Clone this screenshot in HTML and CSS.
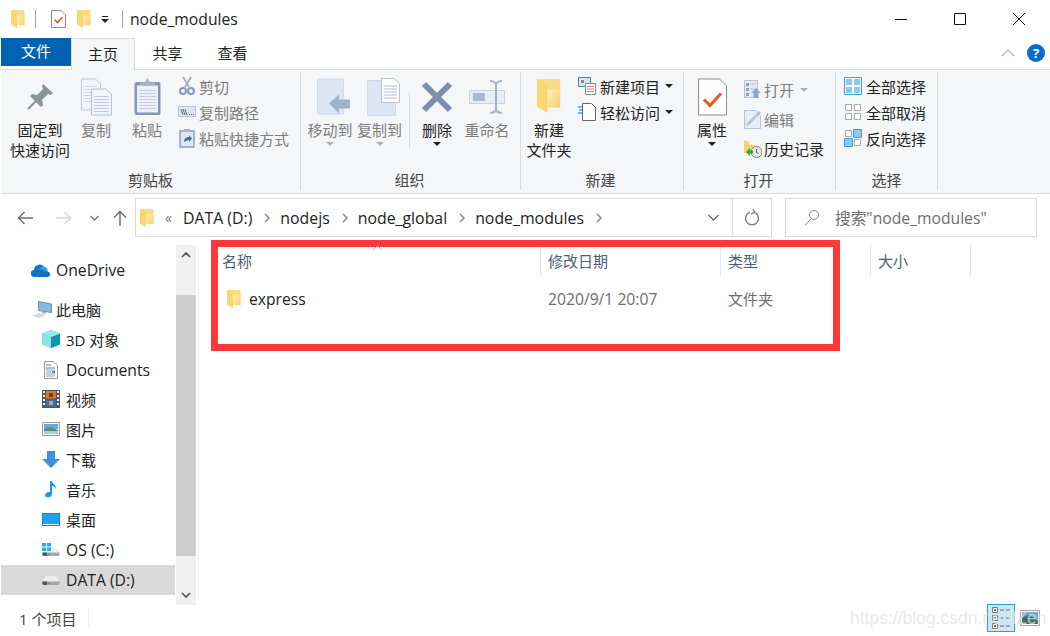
FILE: index.html
```html
<!DOCTYPE html>
<html>
 <head>
  <title>node_modules</title><meta charset="utf-8">
  <link rel="stylesheet" href="styles.css">
 </head>
 <body>
  <svg class="defs" width="0" height="0">
    <defs>
      <linearGradient id="folder-front" x1="0" y1="0" x2="1" y2="1">
        <stop offset="0" stop-color="#ffeeb4"/>
        <stop offset="1" stop-color="#f7cf68"/>
      </linearGradient>
    </defs>
    <symbol id="folder" viewBox="0 0 14 19" preserveAspectRatio="none">
      <path d="M0 0h13.500v15H0z" fill="#f9dc86"/>
      <path d="M0 0l6 2.500V19L0 15.500z" fill="#f8d674"/>
      <path d="M6 6h7.500v10H6z" fill="url(#folder-front)"/>
    </symbol>
    <symbol id="drive" viewBox="0 0 20 12">
      <path d="M4 1h11l4.500 6H.5z" fill="#eceef0"/>
      <path d="M.5 7h19v3l-1 1H1.500l-1-1z" fill="#a2a6aa"/>
      <path d="M.5 7h5v4H1.500l-1-1z" fill="#55595e"/>
      <path d="M6 8.500h3V10H6z" fill="#4fb848"/>
    </symbol>
    <symbol id="chev" viewBox="0 0 6 10">
      <path d="M1 1l4 4-4 4" fill="none" stroke="#868686" stroke-width="1.500"/>
    </symbol>
  </svg>

  <div class="window">
    <div class="titlebar">
      <svg class="qa-folder" width="14" height="18"><use href="#folder"/></svg>
      <span class="qa-sep"></span>
      <svg class="qa-check" width="15" height="18" viewBox="0 0 15 18">
        <path d="M.5.500h9.500l4.500 4.500v12.500H.5z" fill="#fff" stroke="#8a8a8a"/>
        <path d="M3.500 9.500l3 3 5-5.500" fill="none" stroke="#e8531f" stroke-width="1.600"/>
      </svg>
      <svg class="qa-folder2" width="14" height="18"><use href="#folder"/></svg>
      <svg class="qa-more" width="8" height="7" viewBox="0 0 8 7"><path d="M1 0h6v1H1zM0 3h8L4 7z" fill="#222"/></svg>
      <span class="qa-sep qa-sep2"></span>
      <span class="title">node_modules</span>
      <div class="win-btns">
        <svg width="14" height="14" viewBox="0 0 14 14"><path d="M1 7.500h12" stroke="#111"/></svg>
        <svg width="14" height="14" viewBox="0 0 14 14"><path d="M1.500 1.500h11v11h-11z" fill="none" stroke="#111"/></svg>
        <svg width="14" height="14" viewBox="0 0 14 14"><path d="M1 1l12 12M13 1L1 13" stroke="#111"/></svg>
      </div>
    </div>

    <div class="tabs">
      <div class="tab tab-file">文件</div>
      <div class="tab tab-on">主页</div>
      <div class="tab">共享</div>
      <div class="tab">查看</div>
      <div class="tabs-right">
        <svg width="14" height="8" viewBox="0 0 14 8"><path d="M1 7l6-6 6 6" fill="none" stroke="#aeaeae" stroke-width="1.200"/></svg>
        <span class="help">?</span>
      </div>
    </div>

    <div class="ribbon">
      <div class="group g-clip">
        <div class="group-body">
          <div class="big b-pin">
            <svg width="26" height="26" viewBox="0 0 26 26"><path d="M16 0l10 9-2 2-3-1-6 6 1 5-2 2L3 12l2-2 5 1 6-6-1-3z" fill="#8b9497"/><path d="M1 25l8-8" stroke="#8b9497" stroke-width="2.200"/></svg>
            <span>固定到<br>快速访问</span>
          </div>
          <div class="big b-copy off">
            <svg width="31" height="37" viewBox="0 0 31 37">
              <path d="M.5.500h14l5 5v26H.5z" fill="#f2f5fb" stroke="#b9c6dc"/>
              <path d="M3 8h13M3 11h13M3 14h13M3 17h13M3 20h13M3 23h13" stroke="#cdd6e8"/>
              <path d="M10.500 10.500h14l6 5v21h-20z" fill="#f2f5fb" stroke="#b0bed6"/>
              <path d="M13 18h15M13 21h15M13 24h15M13 27h15M13 30h15M13 33h15" stroke="#bcc8de"/>
            </svg>
            <span>复制</span>
          </div>
          <div class="big b-paste off">
            <svg width="27" height="37" viewBox="0 0 27 37">
              <rect x=".5" y="3.500" width="26" height="33" rx="2" fill="#8596b2"/>
              <path d="M3 7h21v27H3z" fill="#eef1f7"/>
              <path d="M5 12h17M5 15h17M5 18h17M5 21h17M5 24h17M5 27h17M5 30h17" stroke="#c4cee0"/>
              <path d="M6 7V4h5l2-4h1l2 4h5v3z" fill="#a8b4c9"/>
            </svg>
            <span>粘贴</span>
          </div>
          <div class="small-col c-clip off">
            <div class="small">
              <svg width="18" height="20" viewBox="0 0 18 20"><path d="M5 1l6 10M13 1L7 11" stroke="#a6a9ae" stroke-width="1.600"/><circle cx="5" cy="15" r="3" fill="none" stroke="#8599b8" stroke-width="2"/><circle cx="13" cy="15" r="3" fill="none" stroke="#8599b8" stroke-width="2"/></svg>
              <span>剪切</span>
            </div>
            <div class="small">
              <svg width="18" height="12" viewBox="0 0 18 12"><path d="M.5.500h17v10H.5z" fill="#dfe6f1" stroke="#b5c3d8"/><path d="M3 3l2 6M5 3l2 6M7 3l2 6" stroke="#667"/><path d="M11 8.500h5" stroke="#667" stroke-dasharray="1 1"/></svg>
              <span>复制路径</span>
            </div>
            <div class="small">
              <svg width="16" height="20" viewBox="0 0 16 20"><path d="M1 3h14v16H1z" fill="#dfe6f1" stroke="#8b9cb7" stroke-width="1.400"/><path d="M5 1h6v3H5z" fill="#a8b4c9"/><path d="M5 14c0-3 2-5 5-5V7l3 3.500-3 3.500v-2c-2 0-3 1-5 2z" fill="#4c6a96"/></svg>
              <span>粘贴快捷方式</span>
            </div>
          </div>
        </div>
        <div class="group-label">剪贴板</div>
      </div>

      <div class="group g-org">
        <div class="group-body">
          <div class="big b-move off">
            <svg width="33" height="37" viewBox="0 0 33 37">
              <path d="M.5.500h26v35H.5z" fill="#dce5f3" stroke="#cfdaeb"/>
              <path d="M12 25l10-9v5h11v9H22v5z" fill="#9fb0cb"/>
            </svg>
            <span>移动到</span><i class="drop"></i>
          </div>
          <div class="big b-copyto off">
            <svg width="33" height="38" viewBox="0 0 33 38">
              <path d="M.5 2.500h28v35H.5z" fill="#dce5f3" stroke="#cfdaeb"/>
              <path d="M14.500.500h12l6 5v19h-18z" fill="#fff" stroke="#b3c4dc"/>
              <path d="M17 8h13M17 11h13M17 14h13M17 17h13M17 20h13" stroke="#a9bbd4"/>
            </svg>
            <span>复制到</span><i class="drop"></i>
          </div>
          <span class="vsep"></span>
          <div class="big b-del">
            <svg width="32" height="32" viewBox="0 0 32 32"><path d="M3 3l26 26M29 3L3 29" stroke="#7e8fab" stroke-width="6"/></svg>
            <span>删除</span><i class="drop dark"></i>
          </div>
          <div class="big b-ren off">
            <svg width="36" height="34" viewBox="0 0 36 34">
              <path d="M.5 10.500h35v13H.5z" fill="#e6edf7" stroke="#c4d2e6"/>
              <path d="M4 13h12v8H4z" fill="#a9b9d1"/>
              <path d="M21 1c3 0 5 1 6 3 1-2 3-3 6-3M27 4v26M21 33c3 0 5-1 6-3 1 2 3 3 6 3" fill="none" stroke="#a3b3ca" stroke-width="2"/>
            </svg>
            <span>重命名</span>
          </div>
        </div>
        <div class="group-label">组织</div>
      </div>

      <div class="group g-new">
        <div class="group-body">
          <div class="big b-newf">
            <svg class="folder-lg" width="24" height="34"><use href="#folder"/></svg>
            <span>新建<br>文件夹</span>
          </div>
          <div class="small-col c-new">
            <div class="small">
              <svg width="18" height="18" viewBox="0 0 18 18">
                <path d="M.5.500h12v9H.5z" fill="#d7e7f5" stroke="#4e7fa6"/>
                <path d="M3 3h3v3H3z" fill="#6aa350"/>
                <path d="M7.500 6.500h10v11h-10z" fill="#fff" stroke="#8b8b8b"/>
                <path d="M9 9.500h7M9 12h7M9 14.500h7" stroke="#d98080"/>
              </svg>
              <span>新建项目</span><i class="drop dark"></i>
            </div>
            <div class="small">
              <svg width="18" height="18" viewBox="0 0 18 18">
                <path d="M4.500.500h9l4 4v13h-13z" fill="#fff" stroke="#666"/>
                <path d="M0 4h5M1 7h4M0 10h5" stroke="#1c6fb8"/>
              </svg>
              <span>轻松访问</span><i class="drop dark"></i>
            </div>
          </div>
        </div>
        <div class="group-label">新建</div>
      </div>

      <div class="group g-open">
        <div class="group-body">
          <div class="big b-prop">
            <svg width="29" height="37" viewBox="0 0 29 37">
              <path d="M.5.500h21l7 7v29H.5z" fill="#fff" stroke="#8d8d8d"/>
              <path d="M6 21l6 6 11-12" fill="none" stroke="#ea5a1c" stroke-width="3"/>
            </svg>
            <span>属性</span><i class="drop dark"></i>
          </div>
          <div class="small-col c-open">
            <div class="small off">
              <svg width="18" height="19" viewBox="0 0 18 19">
                <path d="M.5.500h13v17H.5z" fill="#e5ebf4" stroke="#b5c3d8"/>
                <path d="M2 3h3v3H2zM2 8h3v3H2zM2 13h3v3H2z" fill="#8fa2be"/>
                <path d="M6 4h6M6 9h6" stroke="#b5c3d8"/>
                <path d="M12 8l5 5h-2.500v5h-5v-5H7z" fill="#8ea8c8"/>
              </svg>
              <span>打开</span><i class="drop"></i>
            </div>
            <div class="small off">
              <svg width="18" height="19" viewBox="0 0 18 19">
                <path d="M.5.500h11l5 5v13H.5z" fill="#e7edf6" stroke="#b5c3d8"/>
                <path d="M3 15L16 2" stroke="#b4c4dc" stroke-width="2.500"/>
              </svg>
              <span>编辑</span>
            </div>
            <div class="small">
              <svg width="18" height="19" viewBox="0 0 18 19">
                <path d="M0 1l5 2v3h6v8H0z" fill="#f7d26c"/>
                <circle cx="12.500" cy="13" r="5.500" fill="#e8e8e8" stroke="#808080"/>
                <path d="M12.500 10v3.500l2 1" fill="none" stroke="#555"/>
                <path d="M2 13l4-4v2.500h3v3H6V17z" fill="#3aa53a"/>
              </svg>
              <span>历史记录</span>
            </div>
          </div>
        </div>
        <div class="group-label">打开</div>
      </div>

      <div class="group g-sel">
        <div class="group-body">
          <div class="small-col c-sel">
            <div class="small">
              <svg width="18" height="18" viewBox="0 0 18 18"><path d="M.5.500h17v17H.5z" fill="#fff" stroke="#3c9fe0"/><path d="M2 2h6v6H2zM10 2h6v6h-6zM2 10h6v6H2zM10 10h6v6h-6z" fill="#8cc8f2"/></svg>
              <span>全部选择</span>
            </div>
            <div class="small">
              <svg width="18" height="18" viewBox="0 0 18 18"><path d="M1.500 1.500h6v6h-6zM10.500 1.500h6v6h-6zM1.500 10.500h6v6h-6zM10.500 10.500h6v6h-6z" fill="#fff" stroke="#a8a8a8"/></svg>
              <span>全部取消</span>
            </div>
            <div class="small">
              <svg width="18" height="18" viewBox="0 0 18 18"><path d="M1.500 1.500h6v6h-6zM10.500 10.500h6v6h-6z" fill="#fff" stroke="#a8a8a8"/><path d="M9.500.500h8v8h-8zM.5 9.500h8v8h-8z" fill="#8cc8f2" stroke="#3c9fe0"/></svg>
              <span>反向选择</span>
            </div>
          </div>
        </div>
        <div class="group-label">选择</div>
      </div>
    </div>

    <div class="addressbar">
      <div class="nav-btns">
        <svg class="n-back" width="16" height="14" viewBox="0 0 16 14"><path d="M16 7H1.500M7.500 1l-6 6 6 6" fill="none" stroke="#6f6f6f" stroke-width="1.500"/></svg>
        <svg class="n-fwd" width="16" height="14" viewBox="0 0 16 14"><path d="M0 7h14.500M8.500 1l6 6-6 6" fill="none" stroke="#d6d6d6" stroke-width="1.500"/></svg>
        <svg class="n-down" width="9" height="6" viewBox="0 0 9 6"><path d="M.5 1l4 4 4-4" fill="none" stroke="#777" stroke-width="1.400"/></svg>
        <svg class="n-up" width="14" height="16" viewBox="0 0 14 16"><path d="M7 16V1.500M1 7.500l6-6 6 6" fill="none" stroke="#6f6f6f" stroke-width="1.500"/></svg>
      </div>
      <div class="path">
        <svg class="path-folder" width="14" height="18"><use href="#folder"/></svg>
        <span class="crumb-more">«</span>
        <span class="crumb">DATA (D:)</span><svg class="chev" width="6" height="10"><use href="#chev"/></svg>
        <span class="crumb">nodejs</span><svg class="chev" width="6" height="10"><use href="#chev"/></svg>
        <span class="crumb">node_global</span><svg class="chev" width="6" height="10"><use href="#chev"/></svg>
        <span class="crumb">node_modules</span><svg class="chev" width="6" height="10"><use href="#chev"/></svg>
        <svg class="path-drop" width="11" height="7" viewBox="0 0 11 7"><path d="M.5 1l5 5 5-5" fill="none" stroke="#666" stroke-width="1.300"/></svg>
        <div class="path-refresh">
          <svg width="16" height="17" viewBox="0 0 16 17"><path d="M10 3.200a6.500 6.500 0 1 1-4 0" fill="none" stroke="#7a7a7a" stroke-width="1.300"/><path d="M9 0l1.500 3.300L7 5" fill="none" stroke="#7a7a7a" stroke-width="1.300"/></svg>
        </div>
      </div>
      <div class="search">
        <svg width="16" height="17" viewBox="0 0 16 17"><circle cx="10" cy="6" r="4.500" fill="none" stroke="#8a8a8a"/><path d="M7 10l-6 6" stroke="#8a8a8a"/></svg>
        <span>搜索"node_modules"</span>
      </div>
    </div>

    <div class="main">
      <div class="sidebar">
        <ul class="tree">
          <li class="t-one en">
            <svg width="20" height="14" viewBox="0 0 20 14"><path d="M3.500 14a3.500 3.500 0 0 1-.5-7A5.500 5.500 0 0 1 13 4a4.500 4.500 0 0 1 3.500 4.500A2.800 2.800 0 0 1 17 14z" fill="#1172c4"/><path d="M7 6.500a5 5 0 0 1 6-2.500 4.500 4.500 0 0 1 3.500 4.500c-2-.5-3 0-4-1-1.500-1.500-3.500-1.500-5.500-1z" fill="#2aa0e8"/></svg>
            <span>OneDrive</span>
          </li>
          <li class="t-pc">
            <svg width="20" height="17" viewBox="0 0 20 17">
              <path d="M6.500.500l13 2.500v8.500l-13-2z" fill="#7fbcea" stroke="#7b8a99"/>
              <path d="M10 10.500l4 .7v1.500l-4-.7z" fill="#a9b2ba"/>
              <path d="M0 15l7-3 7 2-7 3z" fill="#d3d7db"/>
            </svg>
            <span>此电脑</span>
          </li>
          <li>
            <svg width="18" height="18" viewBox="0 0 18 18"><path d="M9 0l9 3.500v11L9 18 0 14.500v-11z" fill="#33c6d6"/><path d="M9 7l9-3.500v11L9 18z" fill="#0e97ab"/><path d="M9 0l9 3.500L9 7 0 3.500z" fill="#9be9ef"/><path d="M0 3.500L9 7v11L0 14.500z" fill="#c9f3f4" opacity=".6"/></svg>
            <span>3D 对象</span>
          </li>
          <li class="en">
            <svg width="18" height="18" viewBox="0 0 18 18"><path d="M2.500.500h9l4 4v13h-13z" fill="#fff" stroke="#9a9a9a"/><path d="M4 4h5M4 7h9" stroke="#3a82c4"/><path d="M4 9h9M4 11h5M4 13h9M4 15h9" stroke="#8fa0b0"/><path d="M10 10h3v2h-3z" fill="#4aa564"/></svg>
            <span>Documents</span>
          </li>
          <li>
            <svg width="18" height="18" viewBox="0 0 18 18"><path d="M0 0h18v18H0z" fill="#555"/><path d="M1 1h2v2H1zM1 5h2v2H1zM1 9h2v2H1zM1 13h2v2H1zM15 1h2v2h-2zM15 5h2v2h-2zM15 9h2v2h-2zM15 13h2v2h-2z" fill="#eee"/><path d="M4 1h10v7.500H4z" fill="#d8792a"/><path d="M4 9.500h10V17H4z" fill="#2a6fd0"/><path d="M7 3h4v4H7z" fill="#7a3e16"/><path d="M7 11h4v4H7z" fill="#d8a82a"/></svg>
            <span>视频</span>
          </li>
          <li>
            <svg width="18" height="14" viewBox="0 0 18 14"><path d="M.5.500h17v13H.5z" fill="#fff" stroke="#9a9a9a"/><path d="M2 2h14v5H2z" fill="#6ba9d8"/><path d="M2 7l6-2 8 3v4H2z" fill="#5a8c7c"/><path d="M2 9h14v3H2z" fill="#a9d0dc"/></svg>
            <span>图片</span>
          </li>
          <li>
            <svg width="18" height="17" viewBox="0 0 18 17"><path d="M5 0h8v8h5l-9 9-9-9h5z" fill="#3d8fe0"/></svg>
            <span>下载</span>
          </li>
          <li>
            <svg width="18" height="18" viewBox="0 0 18 18"><path d="M8 1h2c0 3 4 3 4 8-1-2-2-3-4-3v8c0 2-2 3.500-4 3.500s-3-1-3-2.500 2-3 4-3l1 .2z" fill="#1a9be8"/></svg>
            <span>音乐</span>
          </li>
          <li>
            <svg width="18" height="13" viewBox="0 0 18 13"><path d="M0 0h18v13H0z" fill="#0a84d8"/><path d="M1 1h16v10H1z" fill="#22a2ee"/><path d="M1 11h16v1H1z" fill="#e8f4fc"/></svg>
            <span>桌面</span>
          </li>
          <li class="en">
            <svg width="18" height="14" viewBox="0 0 18 14"><svg x="0" y="3" width="18" height="11"><use href="#drive"/></svg><path d="M0 0h4v3.500H0zM5 0h4v3.500H5zM0 4.500h4V8H0zM5 4.500h4V8H5z" fill="#18b0ee"/></svg>
            <span>OS (C:)</span>
          </li>
          <li class="sel en">
            <svg width="18" height="11"><use href="#drive"/></svg>
            <span>DATA (D:)</span>
          </li>
        </ul>
        <div class="scrollbar">
          <div class="scroll-btn">
            <svg width="10" height="6" viewBox="0 0 10 6"><path d="M1 5l4-4 4 4" fill="none" stroke="#505050" stroke-width="1.600"/></svg>
          </div>
          <div class="scroll-thumb"></div>
          <div class="scroll-btn bottom">
            <svg width="10" height="6" viewBox="0 0 10 6"><path d="M1 1l4 4 4-4" fill="none" stroke="#505050" stroke-width="1.600"/></svg>
          </div>
        </div>
      </div>

      <div class="list">
        <div class="list-head">
          <div class="col c-name">名称</div>
          <div class="col c-date">修改日期</div>
          <div class="col c-type">类型</div>
          <div class="col c-size">大小</div>
        </div>
        <div class="list-row">
          <div class="cell c-name">
            <svg width="14" height="18"><use href="#folder"/></svg>
            <span>express</span>
          </div>
          <div class="cell c-date">2020/9/1 20:07</div>
          <div class="cell c-type">文件夹</div>
        </div>
      </div>
    </div>

    <div class="statusbar">
      <span class="count">1 个项目</span>
      <div class="views">
        <div class="view-btn">
          <svg width="18" height="22" viewBox="0 0 18 22">
            <path d="M.5.500h5v5h-5zM.5 8.500h5v5h-5zM.5 16.500h5v5h-5z" fill="#fff" stroke="#777"/>
            <path d="M2 2h2v2H2zM2 10h2v2H2z" fill="#4b6c9c"/><path d="M2 18h2v2H2z" fill="#c0392b"/>
            <path d="M8 3h4M14 3h4M8 11h4M14 11h4M8 19h4M14 19h4" stroke="#666"/>
          </svg>
        </div>
        <svg class="view-thumb" width="20" height="16" viewBox="0 0 20 16"><path d="M.5.500h19v15H.5z" fill="#fff" stroke="#a0a0a0"/><path d="M2 2h16v7H2z" fill="#6ba9d8"/><path d="M2 8l6-3 10 5v4H2z" fill="#3f6f68"/></svg>
      </div>
    </div>
  </div>

  <!-- annotation drawn over the screenshot -->
  <div class="red-box"></div>
  <svg class="sort-mark" width="9" height="5" viewBox="0 0 9 5"><path d="M.5 4.500l4-4 4 4" fill="none" stroke="#a0a0a0"/></svg>
  <div class="watermark">https://blog.csdn.net/IZen</div>
 </body>
</html>
```

FILE: styles.css
```css
* {
  box-sizing: border-box;
}

html, body {
  margin: 0;
  height: 100%;
  overflow: hidden;
  background: #fff;
}

body {
  position: relative;
  font-family: "Open Sans", "Noto Sans CJK SC", sans-serif;
  font-size: 15px;
  color: #222;
}

.defs {
  position: absolute;
}

svg {
  display: block;
  flex: none;
}

.window {
  display: flex;
  flex-direction: column;
  width: 1050px;
  height: 636px;
}

/* title bar */
.titlebar {
  display: flex;
  align-items: center;
  height: 38px;
  padding-left: 11px;
}

.qa-sep {
  width: 1px;
  height: 18px;
  background: #a0a0a0;
  margin-left: 10px;
}

.qa-check {
  margin-left: 15px;
}

.qa-folder2 {
  margin-left: 11px;
}

.qa-more {
  margin-left: 10px;
}

.qa-sep2 {
  margin-left: 13px;
}

.title {
  margin-left: 7px;
  font-size: 15.7px;
}

.win-btns {
  display: flex;
  gap: 45px;
  margin-left: auto;
  padding-right: 24px;
}

/* tabs */
.tabs {
  display: flex;
  height: 32px;
  padding-left: 1px;
  border-bottom: 1px solid #dadbdc;
}

.tab {
  width: 65px;
  text-align: center;
  line-height: 30px;
}

.tab-file {
  width: 70px;
  height: 28px;
  background: #0063b1;
  color: #fff;
  line-height: 27px;
}

.tab-on {
  width: 64px;
  height: 32px;
  background: #f5f6f7;
  border: 1px solid #dadbdc;
  border-bottom: 0;
}

.tabs-right {
  display: flex;
  align-items: center;
  gap: 12px;
  margin-left: auto;
  padding: 0 5px 2px 0;
}

.help {
  width: 18px;
  height: 18px;
  border-radius: 50%;
  background: #0a6cc8;
  color: #fff;
  font-size: 13px;
  font-weight: 700;
  line-height: 18px;
  text-align: center;
}

/* ribbon */
.ribbon {
  display: flex;
  height: 124px;
  margin-left: 1px;
  padding-top: 2px;
  background: #f5f6f7;
  border-bottom: 1px solid #dadbdc;
}

.group {
  display: flex;
  flex-direction: column;
  height: 118px;
  border-right: 1px solid #dadbdc;
}

.g-clip { width: 300px; }
.g-org { width: 220px; }
.g-new { width: 163px; }
.g-open { width: 152px; }
.g-sel { width: 102px; }

.g-clip .group-body { padding-left: 9px; }
.g-org .group-body { padding-left: 4px; }
.g-new .group-body { padding-left: 4px; }
.g-open .group-body { padding-left: 6px; }
.g-sel .group-body { padding-left: 8px; }

.group-body {
  display: flex;
  flex: 1;
}

.group-label {
  height: 20px;
  text-align: center;
  line-height: 20px;
  color: #444;
}

.g-org .group-label { padding-right: 2px; }
.g-new .group-label { padding-right: 3px; }
.g-open .group-label { padding-right: 2px; }

.big {
  display: flex;
  flex-direction: column;
  align-items: center;
  height: 92px;
  padding-top: 4px;
  line-height: 20px;
  text-align: center;
  white-space: nowrap;
}

.big svg {
  height: 40px;
  margin-bottom: 4px;
  padding-top: 2px;
  overflow: visible;
}

.big .folder-lg {
  height: 40px;
  padding: 3px 0;
}

.off {
  color: #7c7c7c;
}

.b-pin { width: 60px; }
.b-copy { width: 52px; }
.b-paste { width: 50px; }
.b-move { width: 50px; }
.b-copyto { width: 49px; }
.b-del { width: 46px; }
.b-ren { width: 50px; margin-left: 2px; }
.b-newf { width: 48px; }
.b-prop { width: 44px; }

.b-move svg { margin-left: 6px; }
.b-copyto svg { margin-left: 7px; }

.vsep {
  width: 1px;
  height: 55px;
  margin: 21px 4px 0 5px;
  background: #dadbdc;
}

.drop {
  display: block;
  width: 0;
  height: 0;
  margin-top: 2px;
  border: 4px solid transparent;
  border-top-color: #b0b0b0;
  border-bottom: 0;
}

.drop.dark {
  border-top-color: #222;
}

.small-col {
  display: flex;
  flex-direction: column;
  padding-top: 1px;
}

.c-clip { margin-left: 6px; }
.c-new { margin-left: 5px; }
.c-open { margin-left: 10px; padding-top: 3px; }

.small {
  display: flex;
  align-items: center;
  height: 26px;
  white-space: nowrap;
}

.c-open .small {
  height: 29.500px;
}

.small svg {
  width: 18px;
  margin-right: 4px;
}

.c-clip .small svg { margin-right: 3px; }
.c-open .small svg { margin-right: 2px; }

.small .drop {
  margin: 0 0 0 5px;
}

.c-open .small .drop {
  margin-left: 6px;
}

/* address bar */
.addressbar {
  display: flex;
  align-items: center;
  height: 46px;
  padding-top: 3px;
  padding-bottom: 2px;
  padding-right: 13px;
}

.nav-btns {
  display: flex;
  align-items: center;
  width: 135px;
  padding-left: 17px;
}

.n-fwd { margin-left: 23px; }
.n-down { margin-left: 18px; }
.n-up { margin-left: 14px; }

.path {
  display: flex;
  align-items: center;
  width: 637px;
  height: 39px;
  border: 1px solid #d9d9d9;
  padding-left: 4px;
  font-size: 15.850px;
}

.crumb-more {
  margin: 0 11px;
  font-size: 14px;
  color: #777;
}

.chev {
  margin: 0 10px 0 12px;
}

.path-drop {
  margin-left: auto;
  margin-right: 13px;
}

.path-refresh {
  display: flex;
  align-items: center;
  justify-content: center;
  width: 39px;
  height: 37px;
  border-left: 1px solid #d9d9d9;
}

.search {
  display: flex;
  align-items: center;
  gap: 15px;
  flex: 1;
  height: 39px;
  margin-left: 13px;
  padding-left: 18px;
  border: 1px solid #d9d9d9;
  color: #6d6d6d;
  font-size: 15.7px;
}

/* sidebar + list */
.main {
  display: flex;
  height: 360px;
  padding-top: 5px;
}

.sidebar {
  display: flex;
  width: 199px;
  padding-left: 1px;
  border-right: 1px solid #f0f0f0;
}

.tree {
  list-style: none;
  margin: 0;
  padding: 10px 0 0;
  width: 174px;
}

.tree li {
  display: flex;
  align-items: center;
  height: 30px;
  padding-left: 41px;
  padding-bottom: 2px;
}

.tree li.en {
  padding-bottom: 0;
  font-size: 15.7px;
}

.tree li svg {
  width: 18px;
  margin-right: 6px;
}

.tree li.t-one {
  padding-left: 30px;
  margin-bottom: 10px;
}

.tree li.t-one svg {
  width: 20px;
  margin-right: 5px;
}

.tree li.t-pc {
  padding-left: 31px;
}

.tree li.t-pc svg {
  width: 20px;
  margin-right: 4px;
}

.tree li.sel {
  background: #d9d9d9;
}

.scrollbar {
  display: flex;
  flex-direction: column;
  width: 20px;
  height: 360px;
  margin-left: 1px;
  background: #f0f0f0;
}

.scroll-btn {
  display: flex;
  justify-content: center;
  height: 50px;
  padding-top: 7px;
}

.scroll-btn.bottom {
  align-items: flex-end;
  height: 49px;
  padding: 0 0 7px;
}

.scroll-thumb {
  flex: 1;
  background: #cdcdcd;
}

.list {
  flex: 1;
  padding-left: 15px;
}

.list-head,
.list-row {
  display: flex;
}

.list-head {
  height: 32px;
  color: #4c607a;
}

.col,
.cell {
  padding-left: 7px;
}

.col {
  line-height: 33px;
  border-right: 1px solid #e5e5e5;
}

.col.c-name { padding-left: 8px; }

.c-name { width: 327px; }
.c-date { width: 180px; }
.c-type { width: 150px; }
.c-size { width: 100px; }

.list-row {
  align-items: center;
  height: 30px;
  margin-top: 6px;
  color: #6d6d6d;
}

.cell.c-name {
  display: flex;
  align-items: center;
  gap: 8px;
  padding-top: 2px;
  padding-left: 13px;
  color: #222;
  font-size: 15.7px;
}

.cell.c-date {
  padding-top: 2px;
  font-size: 15.7px;
}

/* status bar */
.statusbar {
  display: flex;
  align-items: center;
  flex: 1;
  padding-left: 19px;
  color: #444;
}

.count {
  width: 70px;
  border-right: 1px solid #f0f0f0;
}

.views {
  display: flex;
  align-items: center;
  gap: 5px;
  margin-left: auto;
  padding-right: 10px;
}

.view-btn {
  display: flex;
  align-items: center;
  justify-content: center;
  width: 28px;
  height: 28px;
  background: #cce8f6;
  border: 1px solid #26a0da;
}

/* overlays */
.red-box {
  position: absolute;
  left: 211px;
  top: 240px;
  width: 629px;
  height: 111px;
  border: 7px solid #fd3838;
}

.sort-mark {
  position: absolute;
  left: 373px;
  top: 245px;
}

.watermark {
  position: absolute;
  left: 850px;
  top: 608px;
  font-family: "Liberation Sans", sans-serif;
  font-size: 17.500px;
  color: rgba(225, 225, 225, .75);
  white-space: nowrap;
}
```
